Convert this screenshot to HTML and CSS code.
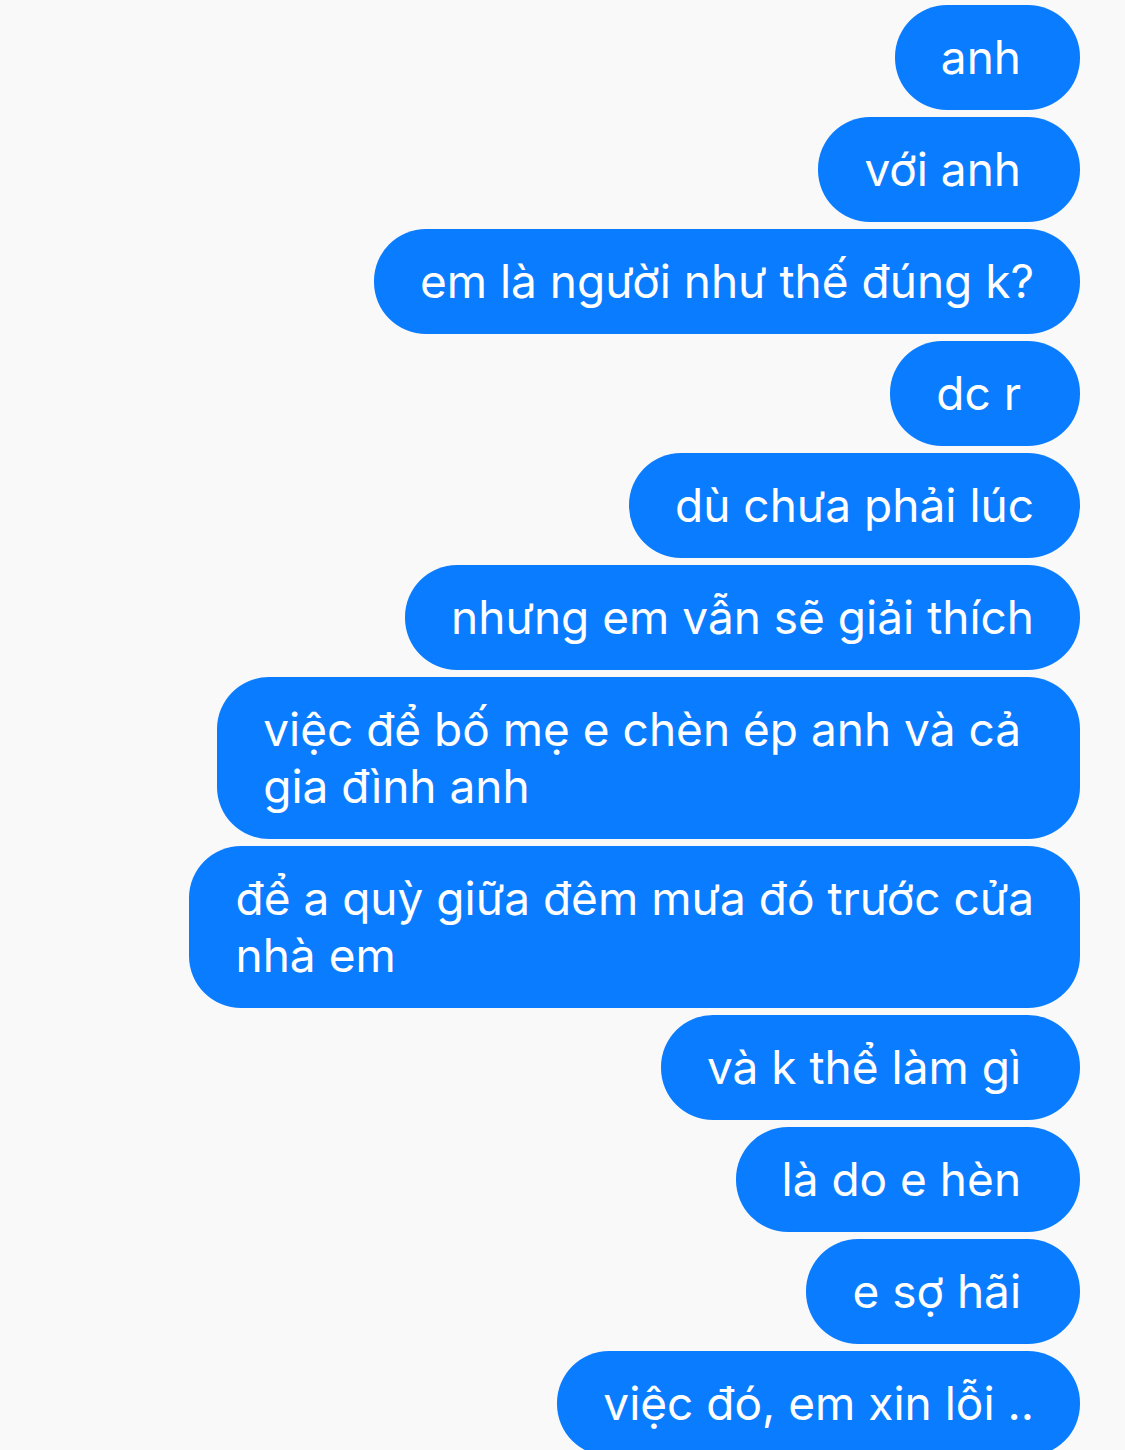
FILE: index.html
```html
<!DOCTYPE html>
<html lang="vi">
<head>
    <meta charset="UTF-8">
    <meta name="viewport" content="width=device-width, initial-scale=1.0">
    <title>Tin nhắn</title>
    <link rel="stylesheet" href="styles.css">
</head>
<body>
    <div class="thread">
        <div class="bubble">anh&nbsp;</div>
        <div class="bubble">với anh&nbsp;</div>
        <div class="bubble">em là người như thế đúng k?</div>
        <div class="bubble">dc r&nbsp;</div>
        <div class="bubble">dù chưa phải lúc</div>
        <div class="bubble">nhưng em vẫn sẽ giải thích</div>
        <div class="bubble">việc để bố mẹ e chèn ép anh và cả&nbsp;<br>gia đình anh</div>
        <div class="bubble">để a quỳ giữa đêm mưa đó trước cửa<br>nhà em</div>
        <div class="bubble">và k thể làm gì&nbsp;</div>
        <div class="bubble">là do e hèn&nbsp;</div>
        <div class="bubble">e sợ hãi&nbsp;</div>
        <div class="bubble">việc đó, em xin lỗi ..</div>
    </div>
</body>
</html>
```

FILE: styles.css
```css
body {
    margin: 0;
    background-color: #f9f9f9;
    font-family: Inter, "Noto Sans", sans-serif;
}

.thread {
    display: flex;
    flex-direction: column;
    align-items: flex-end;
    gap: 7px;
    padding: 5px 45px 0 0;
}

.bubble {
    background-color: #0a7cff;
    color: #fff;
    font-size: 46px;
    line-height: 57px;
    padding: 24px 46px;
    border-radius: 52px;
    max-width: 810px;
}
```
